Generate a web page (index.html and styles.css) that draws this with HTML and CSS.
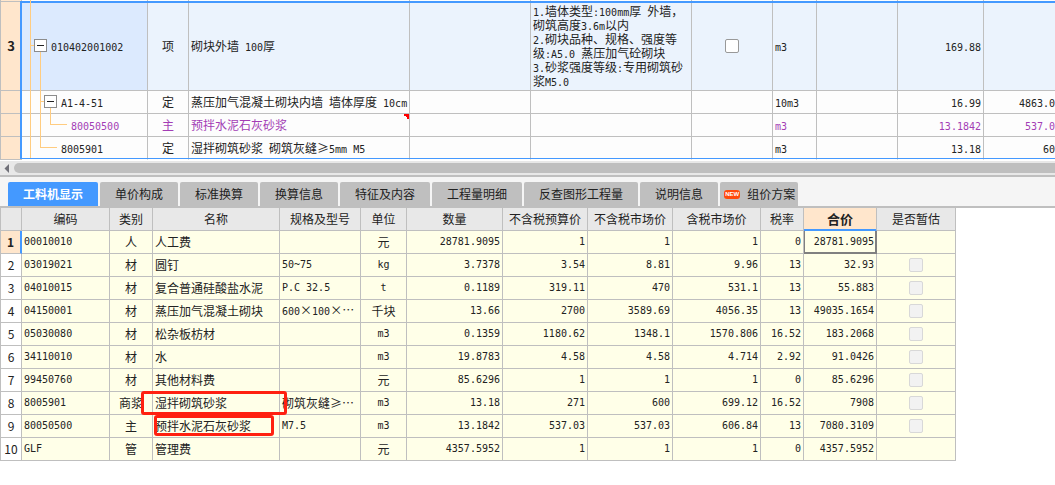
FILE: index.html
```
<!DOCTYPE html>
<html lang="zh-CN">
<head>
<meta charset="utf-8">
<title>工料机显示</title>
<link rel="stylesheet" href="styles.css">
</head>
<body>
<main class="app">
  <section class="bill">
    <table class="grid bill-grid">
      <colgroup>
        <col class="w-no"><col class="w-code"><col class="w-kind"><col class="w-name"><col class="w-spec"><col class="w-feature"><col class="w-lock"><col class="w-unit"><col class="w-expr"><col class="w-qty"><col>
      </colgroup>
      <tbody>
        <tr class="previous"><th></th><td></td><td></td><td></td><td></td><td></td><td></td><td></td><td></td><td></td><td></td></tr>
        <tr class="current">
          <th class="no">3</th>
          <td class="code level-1"><span class="n">010402001002</span></td>
          <td class="mid">项</td>
          <td>砌块外墙<span class="n"> 100</span>厚</td>
          <td></td>
          <td class="feature"><span class="n">1.</span>墙体类型<span class="n">:100mm</span>厚<span class="n"> </span>外墙，<br>砌筑高度<span class="n">3.6m</span>以内<br><span class="n">2.</span>砌块品种、规格、强度等<br>级<span class="n">:A5.0 </span>蒸压加气砼砌块<br><span class="n">3.</span>砂浆强度等级<span class="n">:</span>专用砌筑砂<br>浆<span class="n">M5.0</span></td>
          <td class="mid"><input type="checkbox" class="check" aria-label="锁定"></td>
          <td><span class="n">m3</span></td>
          <td></td>
          <td class="num"><span class="n">169.88</span></td>
          <td></td>
        </tr>
        <tr>
          <th></th>
          <td class="code level-2"><span class="n">A1-4-51</span></td>
          <td class="mid">定</td>
          <td>蒸压加气混凝土砌块内墙<span class="n"> </span>墙体厚度<span class="n"> 10cm</span></td>
          <td></td><td></td><td></td>
          <td><span class="n">10m3</span></td>
          <td></td>
          <td class="num"><span class="n">16.99</span></td>
          <td class="num price"><span class="n">4863.0</span></td>
        </tr>
        <tr class="main-material">
          <th></th>
          <td class="code level-3"><span class="n">80050500</span></td>
          <td class="mid">主</td>
          <td class="noted">预拌水泥石灰砂浆</td>
          <td></td><td></td><td></td>
          <td><span class="n">m3</span></td>
          <td></td>
          <td class="num"><span class="n">13.1842</span></td>
          <td class="num price"><span class="n">537.0</span></td>
        </tr>
        <tr class="last">
          <th></th>
          <td class="code level-2"><span class="n">8005901</span></td>
          <td class="mid">定</td>
          <td>湿拌砌筑砂浆<span class="n"> </span>砌筑灰缝≥<span class="n">5mm M5</span></td>
          <td></td><td></td><td></td>
          <td><span class="n">m3</span></td>
          <td></td>
          <td class="num"><span class="n">13.18</span></td>
          <td class="num price"><span class="n">60</span></td>
        </tr>
      </tbody>
    </table>
    <div class="selection"></div>
    <svg class="tree" width="70" height="160" viewBox="0 0 70 160" fill="none" shape-rendering="crispEdges">
      <path class="branch" d="M30.5 0V158M31 45.500H34M40.500 52V147.500H57M41 101.500H44M50.500 108V124.500H67"/>
      <path class="box" d="M34.500 39.500h12v12h-12zM44.500 95.500h12v12h-12z"/>
      <path class="minus" d="M37 45.500h7M47 101.500h7"/>
    </svg>
  </section>

  <div class="scrollbar">
    <svg class="arrow" width="14" height="14" viewBox="0 0 14 14"><path d="M9 3v9L4.500 7.500z"/></svg>
    <div class="thumb"></div>
  </div>

  <nav class="tabs">
    <button class="tab active">工料机显示</button>
    <button class="tab">单价构成</button>
    <button class="tab">标准换算</button>
    <button class="tab">换算信息</button>
    <button class="tab">特征及内容</button>
    <button class="tab">工程量明细</button>
    <button class="tab">反查图形工程量</button>
    <button class="tab">说明信息</button>
    <button class="tab with-badge"><span class="badge">NEW</span>组价方案</button>
  </nav>

  <section class="detail">
    <table class="grid detail-grid">
      <colgroup>
        <col class="d-no"><col class="d-code"><col class="d-kind"><col class="d-name"><col class="d-spec"><col class="d-unit"><col class="d-qty"><col class="d-p1"><col class="d-p1"><col class="d-p3"><col class="d-rate"><col class="d-total"><col class="d-est">
      </colgroup>
      <thead>
        <tr><th></th><th>编码</th><th>类别</th><th>名称</th><th>规格及型号</th><th>单位</th><th>数量</th><th>不含税预算价</th><th>不含税市场价</th><th>含税市场价</th><th>税率</th><th class="sorted">合价</th><th>是否暂估</th></tr>
      </thead>
      <tbody class="n">
        <tr class="picked"><th>1</th><td>00010010</td><td class="mid zh">人</td><td class="zh">人工费</td><td></td><td class="mid zh">元</td><td class="num">28781.9095</td><td class="num">1</td><td class="num">1</td><td class="num">1</td><td class="num">0</td><td class="num focus">28781.9095</td><td></td></tr>
        <tr><th>2</th><td>03019021</td><td class="mid zh">材</td><td class="zh">圆钉</td><td>50~75</td><td class="mid">kg</td><td class="num">3.7378</td><td class="num">3.54</td><td class="num">8.81</td><td class="num">9.96</td><td class="num">13</td><td class="num">32.93</td><td class="mid"><input type="checkbox" class="check" aria-label="是否暂估 2" disabled></td></tr>
        <tr><th>3</th><td>04010015</td><td class="mid zh">材</td><td class="zh">复合普通硅酸盐水泥</td><td>P.C 32.5</td><td class="mid">t</td><td class="num">0.1189</td><td class="num">319.11</td><td class="num">470</td><td class="num">531.1</td><td class="num">13</td><td class="num">55.883</td><td class="mid"><input type="checkbox" class="check" aria-label="是否暂估 3" disabled></td></tr>
        <tr><th>4</th><td>04150001</td><td class="mid zh">材</td><td class="zh">蒸压加气混凝土砌块</td><td>600<span class="zh">×</span>100<span class="zh">×…</span></td><td class="mid zh">千块</td><td class="num">13.66</td><td class="num">2700</td><td class="num">3589.69</td><td class="num">4056.35</td><td class="num">13</td><td class="num">49035.1654</td><td class="mid"><input type="checkbox" class="check" aria-label="是否暂估 4" disabled></td></tr>
        <tr><th>5</th><td>05030080</td><td class="mid zh">材</td><td class="zh">松杂板枋材</td><td></td><td class="mid">m3</td><td class="num">0.1359</td><td class="num">1180.62</td><td class="num">1348.1</td><td class="num">1570.806</td><td class="num">16.52</td><td class="num">183.2068</td><td class="mid"><input type="checkbox" class="check" aria-label="是否暂估 5" disabled></td></tr>
        <tr><th>6</th><td>34110010</td><td class="mid zh">材</td><td class="zh">水</td><td></td><td class="mid">m3</td><td class="num">19.8783</td><td class="num">4.58</td><td class="num">4.58</td><td class="num">4.714</td><td class="num">2.92</td><td class="num">91.0426</td><td class="mid"><input type="checkbox" class="check" aria-label="是否暂估 6" disabled></td></tr>
        <tr><th>7</th><td>99450760</td><td class="mid zh">材</td><td class="zh">其他材料费</td><td></td><td class="mid zh">元</td><td class="num">85.6296</td><td class="num">1</td><td class="num">1</td><td class="num">1</td><td class="num">0</td><td class="num">85.6296</td><td class="mid"><input type="checkbox" class="check" aria-label="是否暂估 7" disabled></td></tr>
        <tr><th>8</th><td>8005901</td><td class="mid zh">商浆</td><td class="zh marked">湿拌砌筑砂浆<i class="mark mark-wide"></i></td><td class="zh">砌筑灰缝≥…</td><td class="mid">m3</td><td class="num">13.18</td><td class="num">271</td><td class="num">600</td><td class="num">699.12</td><td class="num">16.52</td><td class="num">7908</td><td class="mid"><input type="checkbox" class="check" aria-label="是否暂估 8" disabled></td></tr>
        <tr><th>9</th><td>80050500</td><td class="mid zh">主</td><td class="zh marked">预拌水泥石灰砂浆<i class="mark mark-narrow"></i></td><td>M7.5</td><td class="mid">m3</td><td class="num">13.1842</td><td class="num">537.03</td><td class="num">537.03</td><td class="num">606.84</td><td class="num">13</td><td class="num">7080.3109</td><td class="mid"><input type="checkbox" class="check" aria-label="是否暂估 9" disabled></td></tr>
        <tr><th>10</th><td>GLF</td><td class="mid zh">管</td><td class="zh">管理费</td><td></td><td class="mid zh">元</td><td class="num">4357.5952</td><td class="num">1</td><td class="num">1</td><td class="num">1</td><td class="num">0</td><td class="num">4357.5952</td><td></td></tr>
      </tbody>
    </table>
  </section>
</main>
</body>
</html>
```
FILE: styles.css
```
* { box-sizing: border-box; }

body {
  margin: 0;
  background: #fff;
  color: #222;
  font-family: "Noto Sans CJK SC", sans-serif;
  font-size: 12px;
  line-height: 14px;
}

.app { overflow: hidden; }

/* Shared grid */
.grid {
  table-layout: fixed;
  border-collapse: separate;
  border-spacing: 0;
  border-left: 1px solid #bfbfbf;
}
.grid th,
.grid td {
  height: 23px;
  padding: 0 2px;
  border-right: 1px solid #bfbfbf;
  border-bottom: 1px solid #bfbfbf;
  text-align: left;
  vertical-align: middle;
  white-space: nowrap;
  font-weight: 400;
}
.grid .mid { text-align: center; }
.grid .num { text-align: right; }
.n { font-family: "DejaVu Sans Mono", monospace; font-size: 10px; white-space: pre; }
.zh { font-family: "Noto Sans CJK SC", sans-serif; font-size: 12px; }
span.n { line-height: 8px; }

.check {
  appearance: none;
  display: block;
  width: 14px;
  height: 14px;
  margin: 0 auto;
  border: 1px solid #999;
  border-radius: 2px;
  background: #fff;
}
.check:disabled { border-color: #d8d8d8; background: #f2f2f2; }

/* Bill of quantities */
.bill { position: relative; overflow: hidden; }
.bill-grid { width: 100%; background: #fdfdfd; }
.bill-grid th { background: #ffe6cc; padding: 0; text-align: center; }
.bill-grid .no { font-size: 13px; font-weight: 700; }
.bill-grid .previous th,
.bill-grid .previous td { height: 2px; }
.bill-grid .current td { height: 89px; background: #ebf3fd; }
.bill-grid .current .code { background: #dceafe; }
.bill-grid .last td { border-bottom-color: #fff; }
.bill-grid td:last-child { border-right: 0; }
.bill-grid .price { padding-right: 0; }
.bill-grid .level-1 { padding-left: 29px; }
.bill-grid .level-2 { padding-left: 39px; }
.bill-grid .level-3 { padding-left: 49px; }
.main-material td { color: #a33db5; }
.noted {
  background: linear-gradient(45deg, transparent 50%, #f00 50%) top right / 6px 6px no-repeat;
}

.w-no { width: 21px; }
.w-code { width: 126px; }
.w-kind { width: 41px; }
.w-name { width: 221px; }
.w-spec { width: 121px; }
.w-feature { width: 161px; }
.w-lock { width: 81px; }
.w-unit { width: 44px; }
.w-expr { width: 81px; }
.w-qty { width: 86px; }

.selection {
  position: absolute;
  inset: 1px 0 1px 20px;
  border: solid #4499ff;
  border-width: 2px 0 1px 2px;
}
.tree { position: absolute; top: 0; left: 0; }
.branch { stroke: #ffcc80; }
.box { fill: #fff; stroke: #8c8c8c; }
.minus { stroke: #222; }

/* Horizontal scrollbar */
.scrollbar {
  display: flex;
  height: 17px;
  padding-bottom: 1px;
  border-top: 1px solid #fff;
  border-bottom: 2px solid #bfbfbf;
  background: #e8e8e8;
}
.arrow { fill: #707078; }
.thumb {
  flex: 1;
  height: 10px;
  margin-top: 2px;
  border-radius: 5px 0 0 5px;
  background: #bfbfbf;
}

/* Tabs */
.tabs {
  display: flex;
  gap: 2px;
  padding: 5px 8px 0;
  border-bottom: 2px solid #bfbfbf;
  background: #f5f5f5;
}
.tab {
  height: 24px;
  padding: 0 15px;
  border: 0;
  border-radius: 2px 2px 0 0;
  background: #bfbfbf;
  color: #222;
  font: 12px/24px "Noto Sans CJK SC", sans-serif;
  white-space: nowrap;
}
.tab.active { background: #4499ff; color: #fff; font-weight: 700; }
.tab.with-badge { display: flex; align-items: center; gap: 7px; padding: 0 3px 0 4px; }
.badge {
  width: 16px;
  height: 9px;
  border-radius: 3px;
  background: #ff4a0a;
  font: 700 6px/9px "Liberation Sans", sans-serif;
  text-align: center;
  color: #fff;
}

/* Resource details */
.detail-grid { width: 956px; }
.detail-grid thead th { background: #e8e8e8; padding: 0; text-align: center; }
.detail-grid tbody td { background: #ffffe8; }
.detail-grid tbody th {
  padding: 0;
  text-align: center;
  font-family: "Noto Sans CJK SC", sans-serif;
  font-size: 12px;
}
.detail-grid thead .sorted {
  background: #ffe6cc;
  border-bottom-color: #4499ff;
  font-size: 13px;
  font-weight: 700;
  box-shadow: inset 0 -1px #4499ff;
}
.detail-grid .picked th {
  background: #ffe6cc;
  border-right: 2px solid #4499ff;
  font-weight: 700;
}
.detail-grid .focus {
  border-color: #808080;
  box-shadow: inset 1px -1px #808080, inset -1px 0 #808080;
}

.d-no { width: 21px; }
.d-code { width: 88px; }
.d-kind { width: 43px; }
.d-name { width: 127px; }
.d-spec { width: 81px; }
.d-unit { width: 46px; }
.d-qty { width: 96px; }
.d-p1 { width: 85px; }
.d-p3 { width: 88px; }
.d-rate { width: 43px; }
.d-total { width: 73px; }
.d-est { width: 79px; }

/* Red highlight frames drawn over the rows */
.marked { position: relative; }
.mark {
  position: absolute;
  border: 3px solid #ff2010;
  border-radius: 3px;
}
.mark-wide { inset: -1px -8px -1px -12px; }
.mark-narrow { inset: 0 5px 1px 1px; }
```
